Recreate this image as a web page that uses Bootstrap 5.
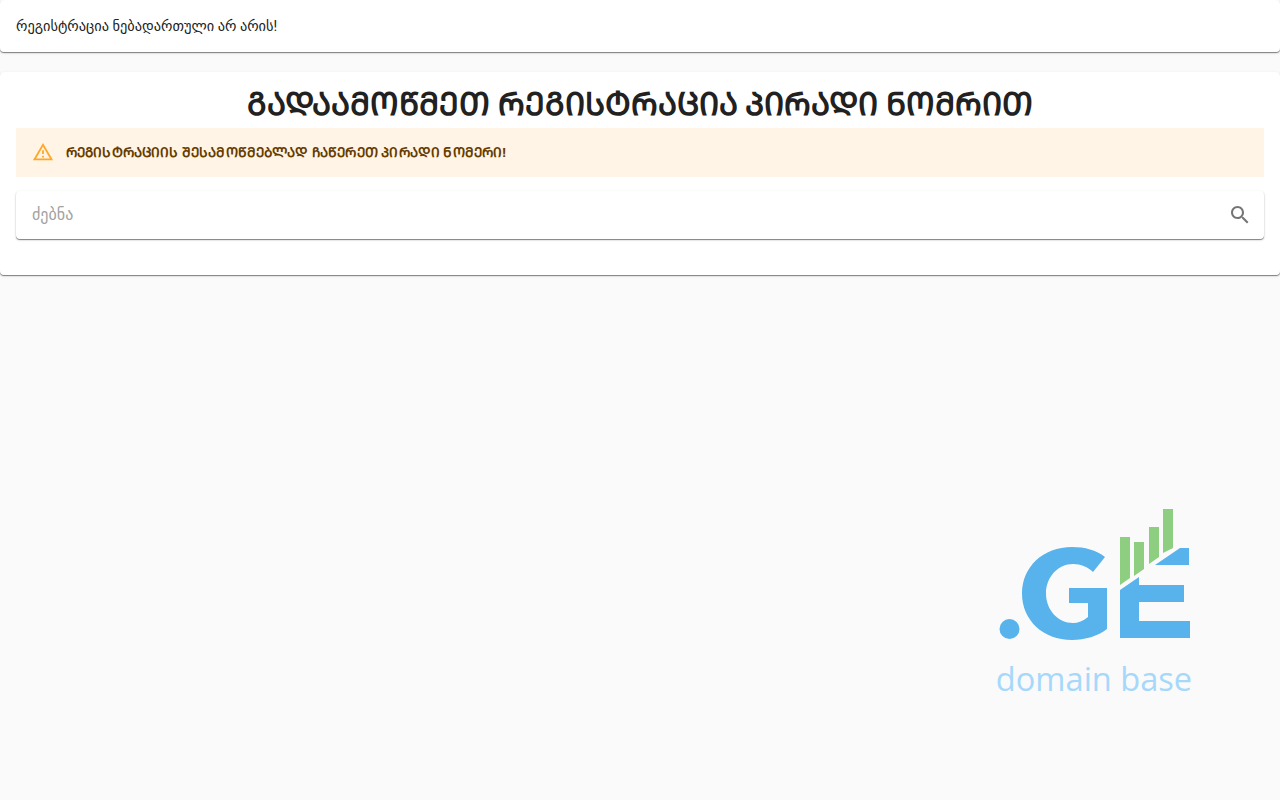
<!DOCTYPE html>
<html lang="en">
<head>
    <meta charset="UTF-8">
    <meta name="viewport" content="width=device-width, initial-scale=1.0">
    <title>Domain Base</title>
    <link href="https://cdn.jsdelivr.net/npm/bootstrap@5.3.0/dist/css/bootstrap.min.css" rel="stylesheet">
    <style>
        body {
            background-color: #fafafa;
            font-family: Roboto, "DejaVu Sans", sans-serif;
            color: #212121;
            height: 800px;
            overflow: hidden;
        }
        .sheet {
            background-color: #fff;
            border-radius: 4px;
            box-shadow: 0 1px 1px rgba(0, 0, 0, 0.45), 0 1px 3px rgba(0, 0, 0, 0.12);
        }
        .notice-bar {
            height: 52px;
            font-size: 14.35px;
            padding: 1px 16px 0;
            margin-bottom: 20px;
        }
        .check-panel {
            height: 203px;
            padding: 0 16px;
        }
        .check-title {
            font-size: 31.75px;
            font-weight: 700;
            line-height: 47px;
            padding-top: 9px;
            margin: 0;
        }
        .warn-box {
            height: 49px;
            background-color: #fff4e5;
            color: #663c00;
            font-size: 13.54px;
            letter-spacing: 0.12px;
            font-weight: 700;
            padding: 0 16px;
            margin-bottom: 14px;
        }
        .search-box {
            height: 48px;
            padding: 0 12px 0 16px;
        }
        .search-input {
            border: 0;
            outline: 0;
            padding: 0;
            background: transparent;
            font-size: 16px;
            color: #212121;
        }
        .search-input::placeholder {
            color: #a2a2a2;
            opacity: 1;
        }
        .logo-mark {
            position: absolute;
            left: 980px;
            top: 495px;
            width: 230px;
            height: 215px;
        }
        .logo-caption {
            position: absolute;
            left: 980px;
            top: 657px;
            width: 228px;
            text-align: center;
            font-family: "Open Sans", sans-serif;
            font-size: 32.6px;
            line-height: 44px;
            color: #a6d8fa;
        }
    </style>
</head>
<body>

<div class="sheet notice-bar d-flex align-items-center">რეგისტრაცია ნებადართული არ არის!</div>

<div class="sheet check-panel">
    <h1 class="check-title text-center">ᲒᲐᲓᲐᲐᲛᲝᲬᲛᲔᲗ ᲠᲔᲒᲘᲡᲢᲠᲐᲪᲘᲐ ᲞᲘᲠᲐᲓᲘ ᲜᲝᲛᲠᲘᲗ</h1>
    <div class="warn-box d-flex align-items-center gap-2">
        <svg class="me-1" width="22" height="22" viewBox="0 1 24 24" fill="#ffa726"><path d="M12 5.99 19.53 19H4.47L12 5.99M12 2 1 21h22L12 2zm1 14h-2v2h2v-2zm0-6h-2v4h2v-4z"/></svg>
        <span>ᲠᲔᲒᲘᲡᲢᲠᲐᲪᲘᲘᲡ ᲨᲔᲡᲐᲛᲝᲬᲛᲔᲑᲚᲐᲓ ᲩᲐᲬᲔᲠᲔᲗ ᲞᲘᲠᲐᲓᲘ ᲜᲝᲛᲔᲠᲘ!</span>
    </div>
    <div class="sheet search-box d-flex align-items-center">
        <input class="search-input flex-grow-1" type="text" placeholder="ძებნა">
        <svg width="24" height="24" viewBox="0 0 24 24" fill="#757575"><path d="M15.5 14h-.79l-.28-.27C15.41 12.59 16 11.11 16 9.5 16 5.91 13.09 3 9.5 3S3 5.91 3 9.5 5.91 16 9.5 16c1.61 0 3.09-.59 4.23-1.57l.27.28v.79l5 4.99L20.49 19l-4.99-5zm-6 0C7.01 14 5 11.99 5 9.5S7.01 5 9.5 5 14 7.01 14 9.5 11.99 14 9.5 14z"/></svg>
    </div>
</div>

<svg class="logo-mark" viewBox="0 0 230 215">
    <circle cx="29.5" cy="134" r="10" fill="#58b3ec"/>
    <path fill="#58b3ec" d="M125 62 C116 55 105 52 92 52 C63 52 42 72 42 98.5 C42 125 63 145 92 145 C105 145 118 141 127 134 V93 H89 V108 H108 V122 C103 126 98 128 93 128 C78 128 66 115 66 98.5 C66 82 78 69 93 69 C101 69 108 72 113 77 Z"/>
    <path fill="#58b3ec" d="M140 143 V95 L159 82 V90 H204 V107 H159 V126 H210 V143 Z"/>
    <path fill="#58b3ec" d="M175 70 L200 53 H209 V70 Z"/>
    <path fill="#8ece81" d="M140 42 H150 V83 L140 90 Z M154 47 H164 V74 L154 81 Z M169 32 H179 V62 L169 69 Z M183 14 H193 V53 L183 58 Z"/>
</svg>
<div class="logo-caption">domain base</div>

<script src="https://cdn.jsdelivr.net/npm/bootstrap@5.3.0/dist/js/bootstrap.bundle.min.js"></script>
</body>
</html>
